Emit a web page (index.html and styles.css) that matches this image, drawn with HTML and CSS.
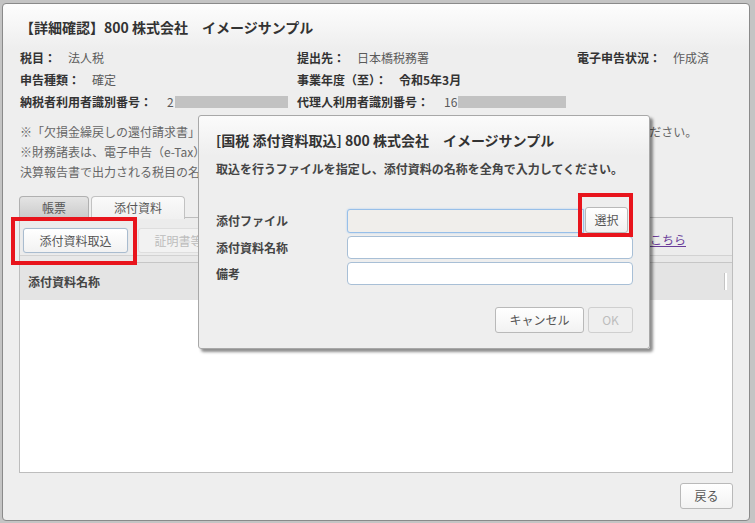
FILE: index.html
```html
<!DOCTYPE html>
<html lang="ja">
<head>
<meta charset="utf-8">
<link rel="stylesheet" href="styles.css">
</head>
<body>
<div class="page">
  <div class="dlg">
    <div class="dlg-title">【詳細確認】800 株式会社　イメージサンプル</div>
    <div class="info">
      <div class="cell"><span class="lbl">税目：</span><span class="val">法人税</span></div>
      <div class="cell"><span class="lbl">提出先：</span><span class="val">日本橋税務署</span></div>
      <div class="cell"><span class="lbl">電子申告状況：</span><span class="val">作成済</span></div>
      <div class="cell"><span class="lbl">申告種類：</span><span class="val">確定</span></div>
      <div class="cell"><span class="lbl">事業年度（至）：</span><span class="val strong">令和5年3月</span></div>
      <div class="cell"></div>
      <div class="cell"><span class="lbl">納税者利用者識別番号：</span><span class="val id">2</span><span class="mask mask1"></span></div>
      <div class="cell"><span class="lbl">代理人利用者識別番号：</span><span class="val id">16</span><span class="mask mask2"></span></div>
      <div class="cell"></div>
    </div>
    <div class="notes">
      <p>※「欠損金繰戻しの還付請求書」などの添付書類は、「添付資料」タブから取込を行い、電子申告の際には送信してください。</p>
      <p>※財務諸表は、電子申告（e-Tax）で提出する場合、勘定科目内訳明細書と</p>
      <p>決算報告書で出力される税目の名称で添付されます。</p>
    </div>
    <div class="tabs">
      <div class="tab">帳票</div>
      <div class="tab active">添付資料</div>
    </div>
    <div class="panel">
      <div class="toolbar">
        <button class="btn">添付資料取込</button>
        <button class="btn disabled">証明書等取込</button>
        <a class="link">こちら</a>
      </div>
      <div class="band"></div>
      <div class="thead">
        <span>添付資料名称</span>
        <span class="thead-grip"></span>
      </div>
      <div class="tbody"></div>
    </div>
    <div class="footer">
      <button class="btn back">戻る</button>
    </div>
  </div>

  <div class="modal">
    <div class="modal-title">[国税 添付資料取込] 800 株式会社　イメージサンプル</div>
    <div class="modal-msg">取込を行うファイルを指定し、添付資料の名称を全角で入力してください。</div>
    <div class="form">
      <div class="row row-file">
        <label class="flbl">添付ファイル</label>
        <div class="input file"></div>
        <button class="btn pick">選択</button>
      </div>
      <div class="row">
        <label class="flbl">添付資料名称</label>
        <div class="input"></div>
      </div>
      <div class="row">
        <label class="flbl">備考</label>
        <div class="input"></div>
      </div>
    </div>
    <div class="actions">
      <button class="btn cancel">キャンセル</button>
      <button class="btn ok disabled">OK</button>
    </div>
  </div>

  <div class="mark mark-import"></div>
  <div class="mark mark-pick"></div>
</div>
</body>
</html>
```

FILE: styles.css
```css
* { box-sizing: border-box; }
html, body { margin: 0; padding: 0; }
body {
  width: 755px;
  height: 523px;
  overflow: hidden;
  background: #c4c4c4;
  font-family: "Noto Sans CJK JP", "Noto Sans", sans-serif;
  font-size: 12px;
  color: #555;
}
.page { position: relative; padding: 3px 0 0 2px; height: 523px; }

.dlg {
  width: 748px;
  height: 518px;
  border: 1px solid #8a8a8a;
  border-radius: 4px;
  background: linear-gradient(#fdfdfd 0, #eeeeee 45px, #eeeeee 100%);
  padding: 0 16px 0 17px;
  display: flex;
  flex-direction: column;
}
.dlg-title {
  margin-top: 13px;
  font-size: 14px;
  font-weight: bold;
  line-height: 20px;
  color: #333;
  white-space: nowrap;
}
.info {
  margin-top: 10px;
  display: grid;
  grid-template-columns: 277px 280px 1fr;
  grid-auto-rows: 22px;
  line-height: 22px;
  white-space: nowrap;
}
.cell { display: flex; align-items: center; }
.lbl { font-weight: bold; color: #333; }
.val { margin-left: 12px; color: #5a5a5a; }
.val.strong { font-weight: bold; color: #333; }
.val.id { margin-left: 15px; }
.mask { display: inline-block; height: 12px; background: #c2c2c2; margin-left: 1px; }
.mask1 { width: 113px; }
.mask2 { width: 108px; }

.notes { margin-top: 9px; color: #666; }
.notes p { margin: 0; line-height: 20px; white-space: nowrap; }

.tabs { margin-top: 14px; margin-left: -1px; display: flex; gap: 2px; height: 22px; position: relative; z-index: 1; }
.tab {
  width: 70px;
  height: 22px;
  border: 1px solid #b0b0b0;
  border-bottom: none;
  border-radius: 4px 4px 0 0;
  background: linear-gradient(#e4e4e4, #cbcbcb);
  text-align: center;
  line-height: 21px;
  color: #555;
}
.tab.active {
  width: 94px;
  height: 23px;
  background: linear-gradient(#fafafa, #f0f0f0);
  border-color: #c2c2c2;
}

.panel {
  margin-top: -1px;
  margin-left: -1px;
  height: 256px;
  border: 1px solid #bdbdbd;
  background: #ececec;
  display: flex;
  flex-direction: column;
}
.toolbar {
  height: 38px;
  padding: 10px 0 0 3px;
  display: flex;
  align-items: flex-start;
  border-bottom: 1px solid #d2d2d2;
  background: #ececec;
}
.btn {
  font-family: inherit;
  font-size: 12px;
  color: #555;
  height: 26px;
  padding: 0 10px;
  border: 1px solid #b9b9b9;
  border-radius: 3px;
  background: linear-gradient(#ffffff, #f2f2f2);
  line-height: 24px;
  cursor: default;
}
.toolbar .btn { width: 105px; height: 25px; border-color: #a9bccf; box-shadow: 0 0 1px #c5d5e5; }
.toolbar .btn.disabled { margin-left: 10px; border-color: #dedede; background: #f2f2f2; color: #bcbcbc; box-shadow: none; }
.link {
  margin-left: auto;
  margin-right: 46px;
  margin-top: 3px;
  color: #6a3d9a;
  text-decoration: underline;
  line-height: 18px;
}
.band { height: 6px; background: #e8e8e8; }
.thead {
  height: 38px;
  border-top: 1px solid #c6c6c6;
  background: #e4e4e4;
  display: flex;
  align-items: center;
  padding-left: 8px;
  font-weight: bold;
  color: #444;
}
.thead-grip {
  margin-left: auto;
  margin-right: 5px;
  width: 3px;
  height: 17px;
  background: #fff;
  border-left: 1px solid #c4c4c4;
}
.tbody { flex: 1; background: #fff; }

.footer { display: flex; justify-content: flex-end; margin-top: 10px; }
.btn.back { width: 53px; padding: 0; height: 26px; }

.modal {
  position: absolute;
  left: 198px;
  top: 115px;
  width: 452px;
  height: 234px;
  border: 1px solid #a8a8a8;
  border-radius: 3px;
  background: linear-gradient(#fbfbfb 0, #eeeeee 40px, #eeeeee 100%);
  box-shadow: 3px 3px 3px rgba(0, 0, 0, 0.45);
  padding: 14px 16px 0 17px;
  z-index: 5;
}
.modal-title {
  font-size: 14px;
  font-weight: bold;
  line-height: 20px;
  color: #333;
  white-space: nowrap;
}
.modal-msg {
  margin-top: 10px;
  font-weight: bold;
  line-height: 18px;
  color: #444;
  white-space: nowrap;
}
.form { margin-top: 29px; }
.row { display: flex; align-items: center; height: 23px; margin-top: 3px; }
.row-file { height: 26px; margin-top: 0; }
.flbl { width: 131px; font-weight: bold; color: #444; }
.input {
  flex: 1;
  height: 23px;
  background: #fff;
  border: 1px solid #a8bfd6;
  border-radius: 4px;
}
.input.file {
  height: 24px;
  margin-top: 1px;
  background: #f0eeeb;
  border-color: #97bfe9;
  box-shadow: 0 0 2px #a9cbf0;
  border-radius: 3px 0 0 3px;
}
.btn.pick { width: 43px; padding: 0; margin-left: 1px; margin-right: 5px; height: 26px; }
.actions { margin-top: 22px; display: flex; justify-content: flex-end; gap: 4px; }
.btn.cancel { width: 89px; padding: 0; }
.btn.ok { width: 45px; padding: 0; }
.btn.ok.disabled { background: #efefef; border-color: #cfcfcf; color: #bdbdbd; }

.mark {
  position: absolute;
  border: 4px solid #e8141c;
  z-index: 10;
}
.mark-import { left: 11px; top: 217px; width: 126px; height: 48px; }
.mark-pick { left: 578px; top: 193px; width: 55px; height: 44px; }
```
